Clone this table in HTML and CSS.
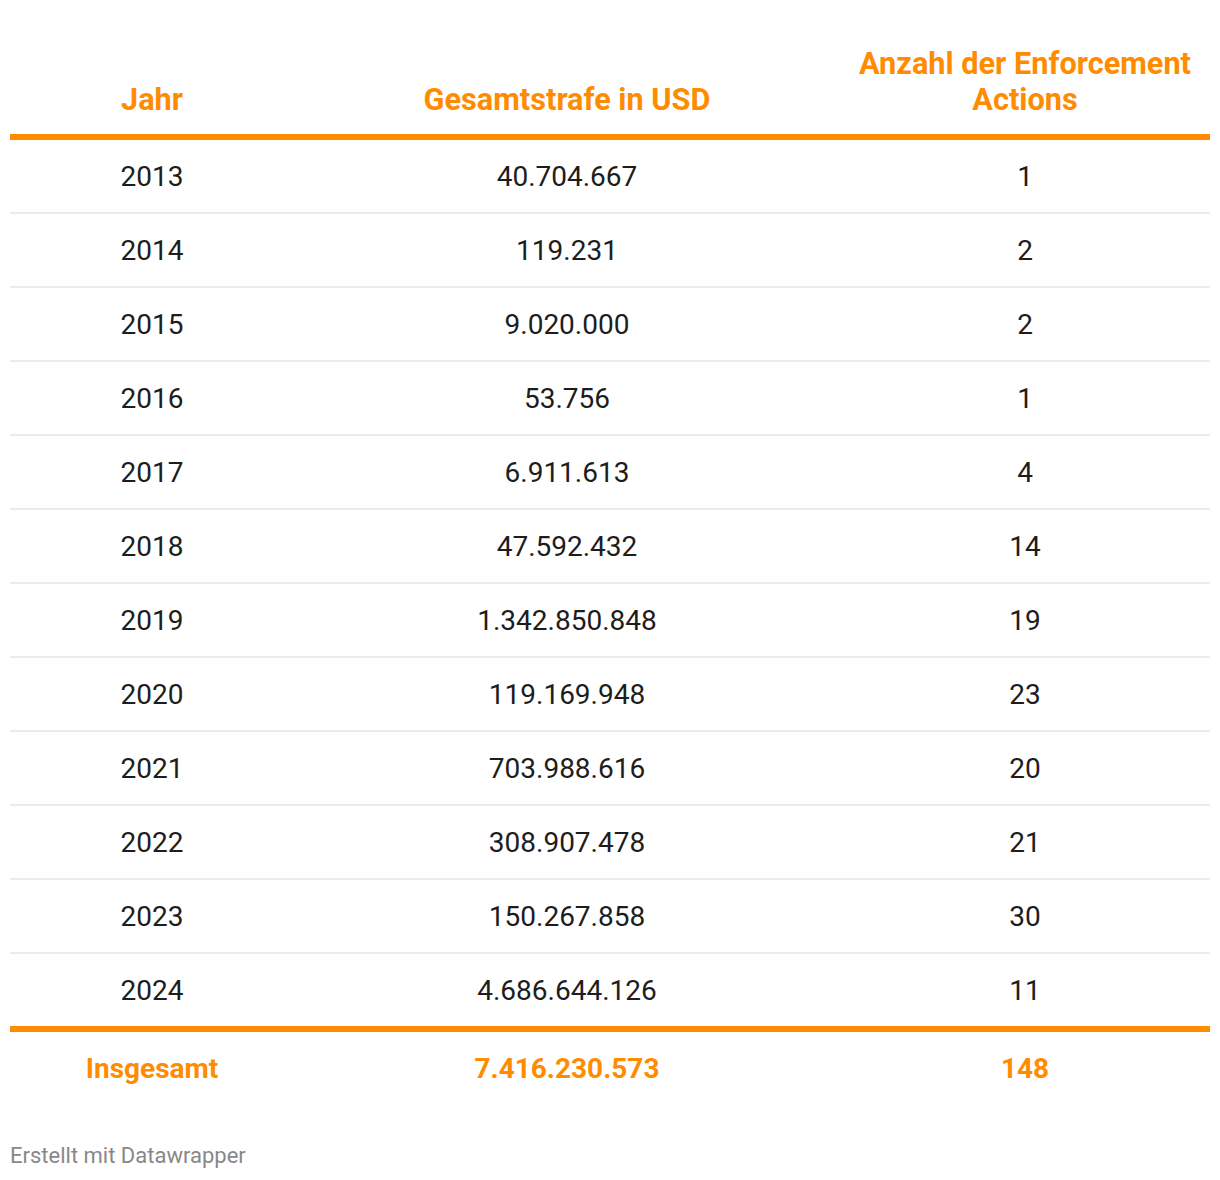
FILE: index.html
```html
<!DOCTYPE html>
<html lang="de">
<head>
<meta charset="utf-8">
<title>Enforcement Actions</title>
<link rel="stylesheet" href="styles.css">
</head>
<body>
<div class="chart">
  <table class="data">
    <colgroup>
      <col class="c1"><col class="c2"><col class="c3">
    </colgroup>
    <thead>
      <tr>
        <th>Jahr</th>
        <th>Gesamtstrafe in USD</th>
        <th>Anzahl der Enforcement Actions</th>
      </tr>
    </thead>
    <tbody>
      <tr><td>2013</td><td>40.704.667</td><td>1</td></tr>
      <tr><td>2014</td><td>119.231</td><td>2</td></tr>
      <tr><td>2015</td><td>9.020.000</td><td>2</td></tr>
      <tr><td>2016</td><td>53.756</td><td>1</td></tr>
      <tr><td>2017</td><td>6.911.613</td><td>4</td></tr>
      <tr><td>2018</td><td>47.592.432</td><td>14</td></tr>
      <tr><td>2019</td><td>1.342.850.848</td><td>19</td></tr>
      <tr><td>2020</td><td>119.169.948</td><td>23</td></tr>
      <tr><td>2021</td><td>703.988.616</td><td>20</td></tr>
      <tr><td>2022</td><td>308.907.478</td><td>21</td></tr>
      <tr><td>2023</td><td>150.267.858</td><td>30</td></tr>
      <tr class="last"><td>2024</td><td>4.686.644.126</td><td>11</td></tr>
    </tbody>
    <tfoot>
      <tr><td>Insgesamt</td><td>7.416.230.573</td><td>148</td></tr>
    </tfoot>
  </table>
  <div class="credit">Erstellt mit Datawrapper</div>
</div>
</body>
</html>
```
FILE: styles.css
```css
html, body {
  margin: 0;
  padding: 0;
  background: #ffffff;
}
body {
  font-family: Roboto, "Liberation Sans", sans-serif;
  color: #1d1d1d;
}
.chart {
  padding: 46px 10px 0 10px;
}
.data {
  width: 1200px;
  border-collapse: collapse;
  table-layout: fixed;
}
.c1 { width: 284px; }
.c2 { width: 546px; }
.c3 { width: 370px; }
.data th {
  color: #ff8c00;
  font-weight: 700;
  font-size: 30.7px;
  line-height: 36px;
  text-align: center;
  vertical-align: bottom;
  padding: 0 8px 16px 8px;
  border-bottom: 6px solid #ff8c00;
}
.data td {
  font-size: 28px;
  line-height: 36px;
  height: 71px;
  padding: 1px 0 0 0;
  text-align: center;
  vertical-align: middle;
}
.data tbody td {
  border-bottom: 2px solid #ececec;
}
.data tbody tr.last td {
  border-bottom: 6px solid #ff8c00;
}
.data tfoot td {
  color: #ff8c00;
  font-weight: 700;
}
.credit {
  margin-top: 40px;
  font-size: 22px;
  line-height: 24px;
  color: #888888;
}
```
